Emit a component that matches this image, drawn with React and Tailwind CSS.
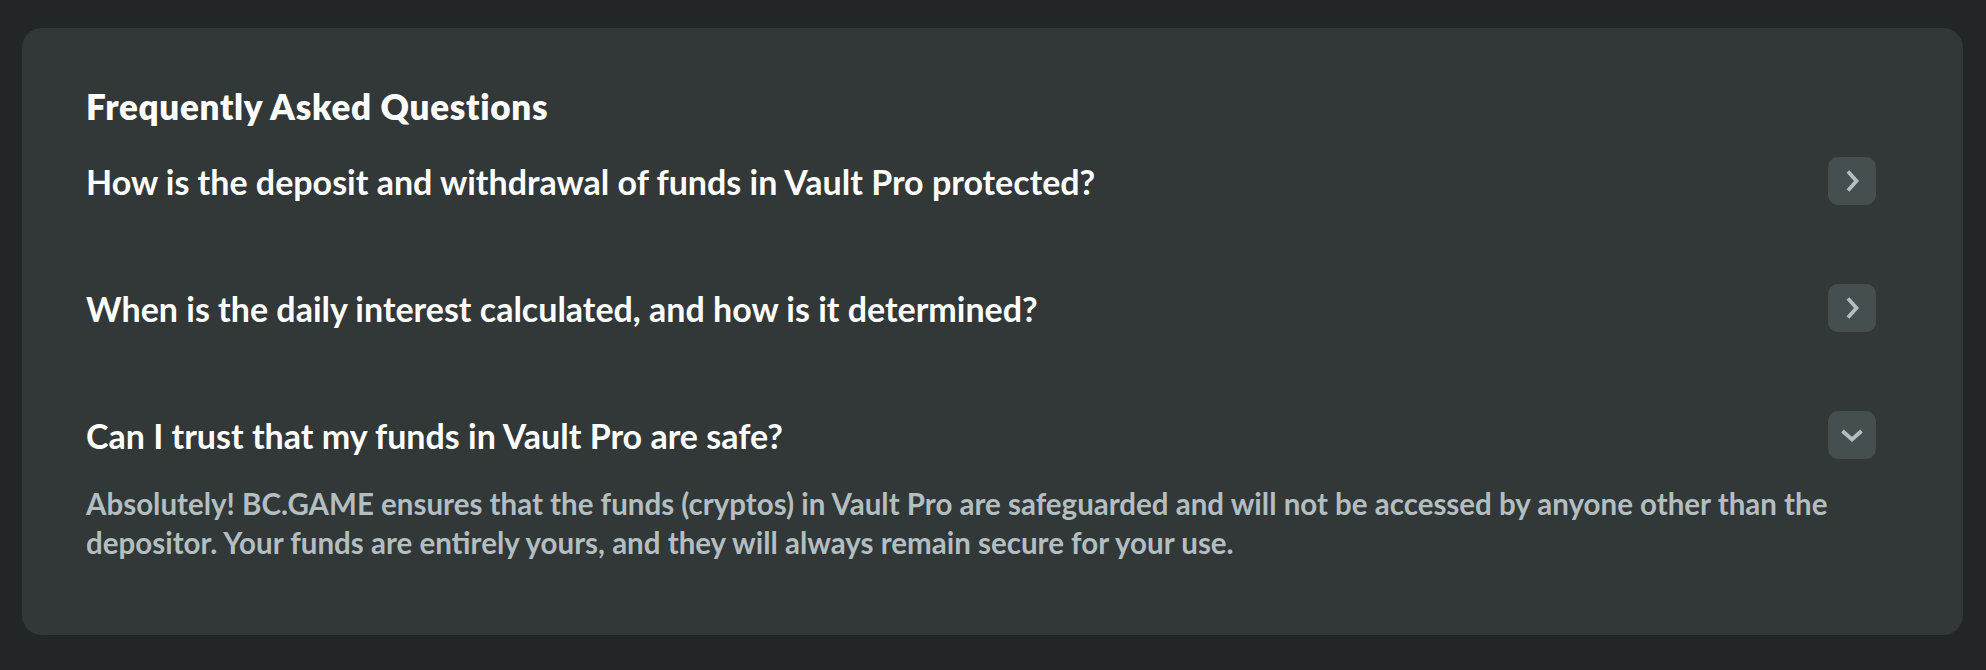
import React, { useState } from "react";

const faqs = [
  {
    q: "How is the deposit and withdrawal of funds in Vault Pro protected?",
    a: "",
  },
  {
    q: "When is the daily interest calculated, and how is it determined?",
    a: "",
  },
  {
    q: "Can I trust that my funds in Vault Pro are safe?",
    a: "Absolutely! BC.GAME ensures that the funds (cryptos) in Vault Pro are safeguarded and will not be accessed by anyone other than the depositor. Your funds are entirely yours, and they will always remain secure for your use.",
  },
];

const Chevron = ({ open }) => (
  <svg
    width="24"
    height="24"
    viewBox="0 0 24 24"
    fill="none"
    className={open ? "rotate-90" : ""}
  >
    <polyline
      points="8,2.5 16.5,12 8,21.5"
      stroke="#b3bec1"
      strokeWidth="3.8"
      strokeLinecap="butt"
      strokeLinejoin="miter"
    />
  </svg>
);

const App = () => {
  const [openIdx, setOpenIdx] = useState(2);

  return (
    <div
      className="min-h-screen bg-[#232626] pt-[28px] pl-[22px] pr-[23px] pb-[34px]"
      style={{ fontFamily: "Lato, 'Noto Sans', sans-serif" }}
    >
      <div className="rounded-[20px] bg-[#323738] pl-16 pr-[87px] pt-[58px] pb-[73px]">
        <h2 className="text-[35px] leading-[40px] font-extrabold tracking-[0.7px] text-white">
          Frequently Asked Questions
        </h2>
        <div className="mt-[31px] flex flex-col gap-[79px]">
          {faqs.map((f, idx) => (
            <div key={idx}>
              <div className="flex h-12 items-center justify-between">
                <div className="text-[34px] font-bold text-white">{f.q}</div>
                <button
                  onClick={() => setOpenIdx(openIdx === idx ? -1 : idx)}
                  className="flex h-12 w-12 items-center justify-center rounded-[10px] bg-[#464f50]"
                >
                  <Chevron open={openIdx === idx} />
                </button>
              </div>
              {openIdx === idx && f.a && (
                <p className="mt-[25px] text-[29.5px] leading-[39px] font-bold text-[#b3bec1]">
                  {f.a}
                </p>
              )}
            </div>
          ))}
        </div>
      </div>
    </div>
  );
};

export default App;
